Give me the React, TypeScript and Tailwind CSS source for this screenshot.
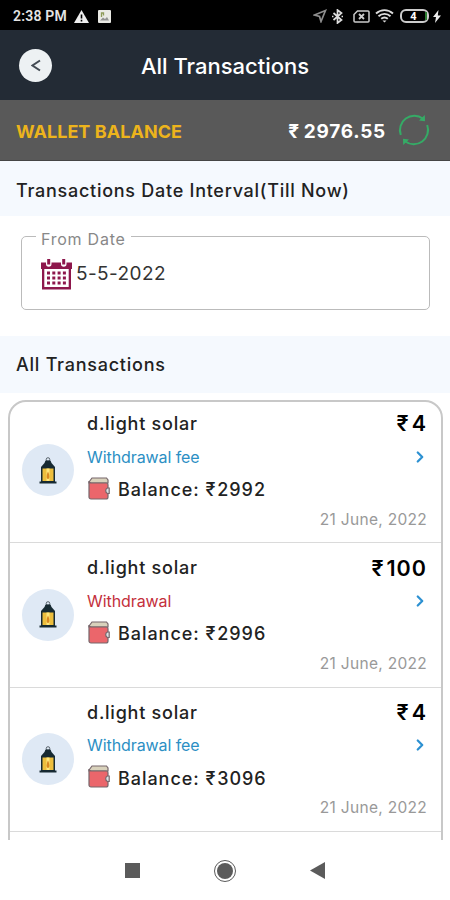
import { ChevronRight } from "lucide-react";

interface Transaction {
  id: number;
  name: string;
  type: string;
  color: string;
  amount: string;
  balance: string;
  date: string;
}

const transactions: Transaction[] = [
  { id: 1, name: "d.light solar", type: "Withdrawal fee", color: "text-[#2c8fc4]", amount: "4", balance: "2992", date: "21 June, 2022" },
  { id: 2, name: "d.light solar", type: "Withdrawal", color: "text-[#c4303c]", amount: "100", balance: "2996", date: "21 June, 2022" },
  { id: 3, name: "d.light solar", type: "Withdrawal fee", color: "text-[#2c8fc4]", amount: "4", balance: "3096", date: "21 June, 2022" },
];

function StatusBar() {
  return (
    <div className="flex h-[30px] shrink-0 items-center justify-between bg-black pt-0.5 pr-[9px] pl-[13px]">
      <div className="flex items-center">
        <span className="w-[54px] font-[Roboto] text-[14px] leading-none font-semibold tracking-[0.2px] whitespace-nowrap text-[#e4e4e4]">
          2:38 PM
        </span>
        <svg className="ml-[7px]" width="15" height="13" viewBox="0 0 15 13">
          <path d="M7.5 0 15 13H0Z" fill="#eee" />
          <path d="M7.5 4.5v4M7.5 9.8v1.6" stroke="#000" strokeWidth="1.6" />
        </svg>
        <svg className="ml-[9px]" width="13" height="13" viewBox="0 0 13 13">
          <rect width="13" height="13" rx="1" fill="#e9e9e4" />
          <path d="M3.5 7V3h2v2.5" stroke="#8d9a58" strokeWidth="1.3" fill="none" />
          <path d="m2 10.5 3-3 2 1.5 2-2 2 3.5Z" fill="#929292" />
        </svg>
      </div>
      <div className="flex items-center">
        <svg width="14" height="14" viewBox="0 0 14 14" fill="none" stroke="#8d8d8d" strokeWidth="1.7">
          <path d="M12.5 1.5 1.5 6l5 1.5L8 12.5Z" />
        </svg>
        <svg className="ml-[5px]" width="11" height="15" viewBox="0 0 11 15" fill="none" stroke="#ddd" strokeWidth="1.7">
          <path d="m1.5 4 8 7-4 3V1l4 3-8 7" />
          <path d="M0 7.5h1.5M9.5 7.5H11" />
        </svg>
        <svg className="ml-[10px]" width="17" height="13" viewBox="0 0 17 13" fill="none" stroke="#ccc" strokeWidth="1.5">
          <path d="M4.5 1H15a1 1 0 0 1 1 1v9a1 1 0 0 1-1 1H2a1 1 0 0 1-1-1V4.5Z" />
          <path d="m6 4 5 5M11 4 6 9" strokeWidth="1.8" />
        </svg>
        <svg className="ml-[5px]" width="19" height="14" viewBox="0 0 19 14" fill="none" stroke="#ddd" strokeWidth="1.9">
          <path d="M1 4.5c5-4.5 12-4.5 17 0M3.5 7.3c3.5-3.2 8.5-3.2 12 0M6.2 9.8c2-1.7 4.6-1.7 6.6 0" />
          <path d="m7.5 11.5 2 2 2-2Z" fill="#ddd" stroke="none" />
        </svg>
        <div className="ml-1.5 flex h-[14px] w-[29px] items-center justify-center rounded-[6px] border-2 border-[#ccc] font-[Roboto] text-[11px] leading-none font-bold text-white">
          <span className="grow text-center">4</span>
          <span className="h-[8px] w-0.5 bg-[#2c7d31]" />
        </div>
        <svg className="ml-1" width="8" height="13" viewBox="0 0 8 13">
          <path d="M5.5 0 0 7h3L2 13l6-7.5H4.8Z" fill="#eee" />
        </svg>
      </div>
    </div>
  );
}

function Rupee({ className }: { className?: string }) {
  return <span className={className}>₹</span>;
}

function RefreshIcon() {
  return (
    <svg width="32" height="32" viewBox="0 0 32 32" fill="none" stroke="#35ab66" strokeWidth="2">
      <path d="M2.8 21A14.3 14.3 0 0 1 25 4.8" />
      <path d="M29.2 11A14.3 14.3 0 0 1 7 27.2" />
      <path d="m26.8 1 .2 6.2-6-.7ZM5.2 31 5 24.8l6 .7Z" fill="#35ab66" stroke="none" />
    </svg>
  );
}

function CalendarIcon() {
  return (
    <svg width="31" height="31" viewBox="0 0 31 31">
      <path d="M0 3.5h31V10h-1v20.5H1V10H0Z" fill="#8d174c" />
      <path d="M3.3 10h24.4v18H3.3Z" fill="#fff" />
      <path d="M5 0h5.5v5a2.75 2.75 0 0 1-5.5 0ZM20 0h5.5v5a2.75 2.75 0 0 1-5.5 0Z" fill="#fff" />
      <path d="M7.7 0v5.5M22.7 0v5.5" stroke="#8d174c" strokeWidth="3" />
      {[14, 19, 24].map((y) => (
        <path key={y} d={`M6 ${y}H25`} stroke="#8d174c" strokeWidth="3" strokeDasharray="3 2.3" />
      ))}
    </svg>
  );
}

function LanternIcon() {
  return (
    <svg width="18" height="27" viewBox="0 0 18 27">
      <circle cx="9" cy="2.5" r="1.8" fill="none" stroke="#59636b" />
      <path d="M6.5 3.5h5l1 2.5 3.5 4v1.5H2V10l3.5-4Z" fill="#172a32" />
      <path d="M2 11h14v14H2Z" fill="#172a32" />
      <path d="M3.5 11.5h11V24h-11Z" fill="#edbe3d" />
      <path d="M7.5 11.5h3V24h-3Z" fill="#ffe77d" />
      <path d="M9 14.5c-2 4-1.7 7.5 0 7.5s2-3.5 0-7.5Z" fill="#d98922" />
      <path d="M.5 24.5h17v2H.5Z" fill="#172a32" />
    </svg>
  );
}

function WalletIcon() {
  return (
    <svg className="-mt-[3px] ml-px" width="22" height="23" viewBox="0 0 22 23" stroke="#76666b" strokeWidth="1.2">
      <path d="M1 5 4 1h14.5L20 3v3H1Z" fill="#d9d2bc" />
      <path d="M1 4c0 1.5 1 2 2.500 2H18a2 2 0 0 1 2 2v12a2 2 0 0 1-2 2H3a2 2 0 0 1-2-2Z" fill="#eb666b" />
      <path d="M21.2 11h-1.7a3 3 0 0 0 0 5.5h1.7Z" fill="#dce2e5" />
    </svg>
  );
}

function TransactionRow({ item }: { item: Transaction }) {
  return (
    <div className="flex h-[144.4px] shrink-0 border-b border-[#dadada] pr-[14px] pl-3">
      <div className="mt-[45.4px] flex size-[52px] shrink-0 items-center justify-center rounded-full bg-[#dfe9f5]">
        <LanternIcon />
      </div>
      <div className="ml-[13px] flex grow flex-col">
        <div className="mt-[9.6px] flex h-[30px] items-center justify-between">
          <span className="text-[18px] font-medium tracking-[0.75px] text-[#222]">{item.name}</span>
          <span className="text-[21.5px] font-semibold tracking-[1px] text-black">
            <Rupee className="mr-0.5" />
            {item.amount}
          </span>
        </div>
        <div className="mt-[3px] flex h-[30px] items-center justify-between">
          <span className={`text-[16px] tracking-[-0.08px] ${item.color}`}>{item.type}</span>
          <ChevronRight size={18} strokeWidth={3} className="-mr-[2px] text-[#2d91d2]" />
        </div>
        <div className="mt-[3px] flex h-[30px] items-center">
          <WalletIcon />
          <span className="ml-2 text-[18px] font-medium tracking-[0.95px] text-[#222]">
            Balance: <Rupee className="mr-px" />
            {item.balance}
          </span>
        </div>
        <span className="self-end text-[15.5px] leading-[29px] tracking-[0.3px] text-[#999]">{item.date}</span>
      </div>
    </div>
  );
}

export default function App() {
  return (
    <div className="flex h-[900px] w-[450px] flex-col overflow-hidden bg-white font-[Inter,'Noto_Sans',sans-serif]">
      <StatusBar />

      {/* Header */}
      <header className="grid h-[70px] shrink-0 grid-cols-[100px_1fr_100px] items-center bg-[#232b35]">
        <button className="ml-[19px] flex size-[33px] items-center justify-center rounded-full bg-[#edf1f3]">
          <svg width="10" height="13" viewBox="0 0 10 13" fill="none" stroke="#434b54" strokeWidth="2">
            <path d="M9 1.5 1.5 6.5 9 11.5" />
          </svg>
        </button>
        <h1 className="pt-0.5 text-center text-[22px] font-medium whitespace-nowrap text-white">
          All Transactions
        </h1>
      </header>

      {/* Wallet balance */}
      <div className="flex h-[61px] shrink-0 items-center border-b border-[#454545] bg-[#595959] pr-5 pl-4">
        <span className="grow pt-0.5 text-[18px] font-bold tracking-[0.05px] text-[#edb41c]">WALLET BALANCE</span>
        <span className="mr-3 pt-1 text-[19px] font-bold tracking-[0.75px] text-white">
          <Rupee className="mr-1" />
          2976.55
        </span>
        <RefreshIcon />
      </div>

      <h2 className="flex h-[55px] shrink-0 items-center bg-[#f5f9fe] pt-1 pl-4 text-[18px] font-medium tracking-[0.73px] text-[#222]">
        Transactions Date Interval(Till Now)
      </h2>

      <div className="h-[120px] shrink-0 pt-[11px] pr-5 pl-[21px]">
        <fieldset className="h-[83px] rounded-[5px] border-[1.5px] border-[#bbb] pl-[19px]">
          <legend className="-ml-[5px] h-[18px] px-[5px] text-[16px] leading-[24px] tracking-[0.75px] text-[#888]">
            From Date
          </legend>
          <div className="mt-[14px] flex items-center gap-1">
            <CalendarIcon />
            <span className="text-[19px] tracking-[0.4px] text-[#333]">5-5-2022</span>
          </div>
        </fieldset>
      </div>

      <h2 className="flex h-[57px] shrink-0 items-center bg-[#f5f9fe] pl-4 text-[18px] font-medium tracking-[0.75px] text-[#222]">
        All Transactions
      </h2>

      <div className="flex h-[447px] shrink-0 flex-col overflow-hidden bg-white pt-[7px] pr-[7px] pl-2">
        <div className="h-[480px] shrink-0 rounded-[18px] border-2 border-[#c8c8c8]">
          <div className="-mt-[3px] flex flex-col">
            {transactions.map((item) => (
              <TransactionRow key={item.id} item={item} />
            ))}
          </div>
        </div>
      </div>

      {/* System navigation */}
      <nav className="flex grow items-center justify-center gap-[74px] bg-white pt-px">
        <div className="size-[15px] bg-[#5b5b5b]" />
        <div className="flex size-[22px] items-center justify-center rounded-full border-[1.5px] border-[#5b5b5b]">
          <div className="size-[16px] rounded-full bg-[#5b5b5b]" />
        </div>
        <svg width="15" height="17" viewBox="0 0 15 17">
          <path d="M15 0v17L0 8.5Z" fill="#5b5b5b" />
        </svg>
      </nav>
    </div>
  );
}
